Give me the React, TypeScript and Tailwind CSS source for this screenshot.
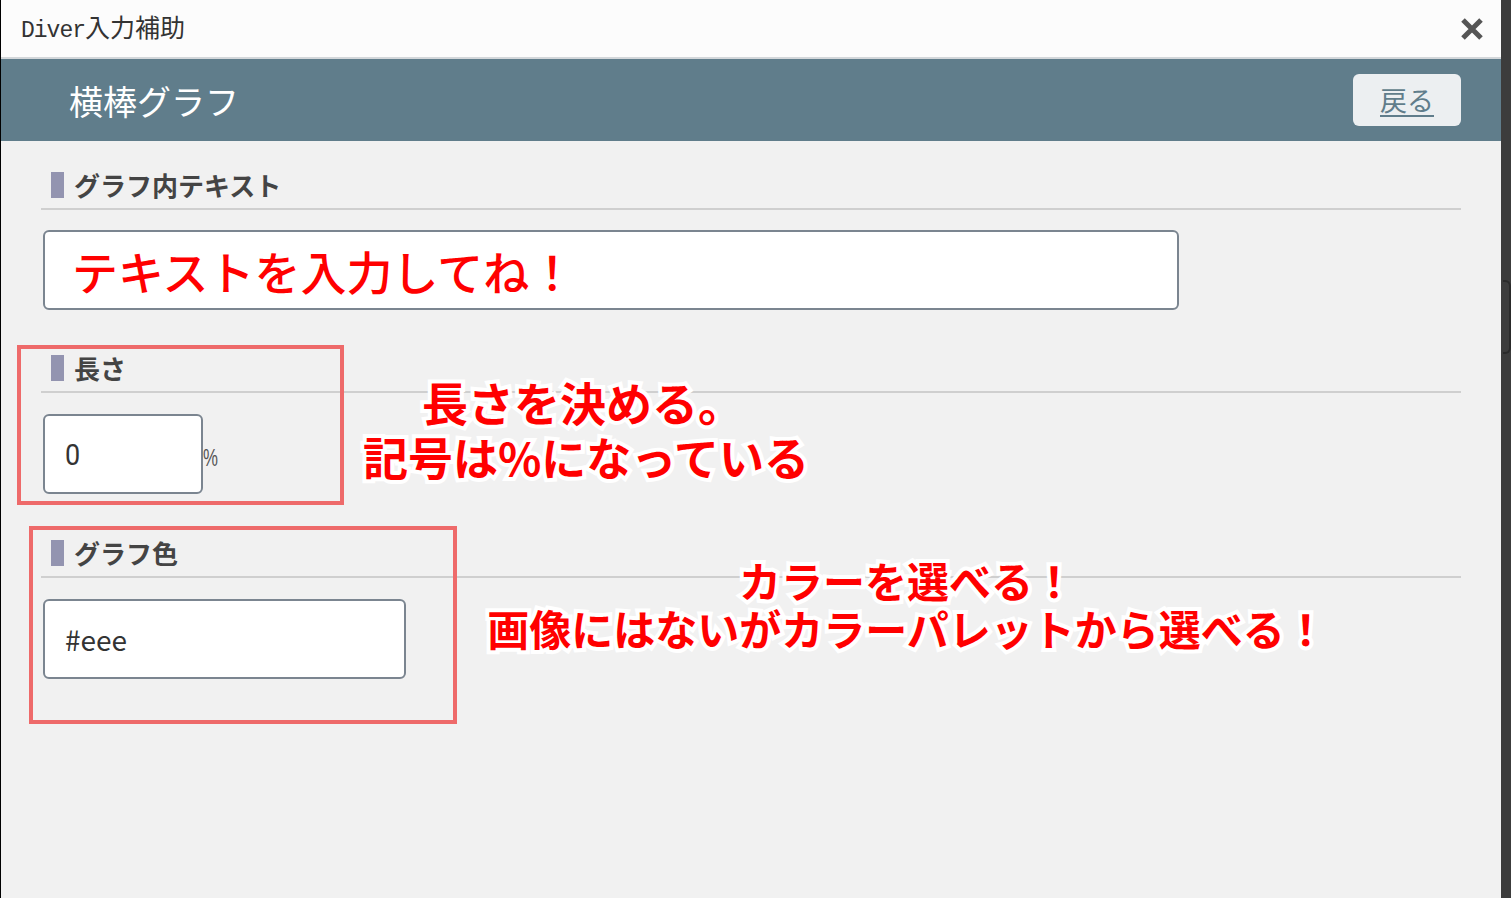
const jp = "font-['Noto_Sans_CJK_JP','Noto_Sans',sans-serif]";
const outline = "[-webkit-text-stroke:8px_white] [paint-order:stroke_fill]";

function SectionHeader({ label }: { label: string }) {
  return (
    <div>
      <div className="flex items-center h-[26px] pl-[10px] gap-[10px]">
        <span className="w-[13px] h-[26px] bg-[#9394b0]" />
        <span className={`${jp} text-[26px] font-bold text-[#444] leading-none`}>{label}</span>
      </div>
      <div className="mt-[10px] h-[2px] bg-[#cfcfcf]" />
    </div>
  );
}

function CloseIcon() {
  return (
    <svg width="24" height="24" viewBox="0 0 24 24">
      <path d="M3 3 L21 21 M21 3 L3 21" stroke="#555" strokeWidth="5" />
    </svg>
  );
}

export default function App() {
  return (
    <div className="w-[1511px] h-[898px] flex overflow-hidden">
      <div className="w-[1501px] h-full border-l border-black bg-[#f1f1f1] flex flex-col">
        {/* title bar */}
        <div className="h-[57px] bg-[#fcfcfc] flex items-center justify-between pl-[20px] pr-[17px] border-b-2 border-[#d3d7da] box-content">
          <div className="flex items-baseline text-[#333]">
            <span className="font-['Liberation_Mono',monospace] text-[23px] tracking-[-1px]">Diver</span>
            <span className={`${jp} text-[25px]`}>入力補助</span>
          </div>
          <CloseIcon />
        </div>

        {/* header */}
        <div className="h-[82px] bg-[#607d8b] flex items-center justify-between pl-[68px] pr-[40px]">
          <span className={`${jp} text-[34px] text-white`}>横棒グラフ</span>
          <button className="w-[108px] h-[52px] rounded-[6px] bg-[#eceff1] flex items-center justify-center">
            <span className={`${jp} text-[27px] text-[#607d8b] underline underline-offset-[4px]`}>戻る</span>
          </button>
        </div>

        {/* content */}
        <div className="relative flex-1 pl-[40px] pr-[40px] pt-[31px]">
          <SectionHeader label="グラフ内テキスト" />
          <div className="mt-[20px] ml-[2px] w-[1136px] h-[80px] bg-white border-2 border-[#7b8590] rounded-[6px] flex items-center pl-[27px]">
            <span className={`${jp} text-[46px] font-medium text-[#f00] leading-none`}>テキストを入力してね！</span>
          </div>

          <div className="mt-[45px]">
            <SectionHeader label="長さ" />
          </div>
          <div className="mt-[21px] ml-[2px] flex items-end">
            <div className="w-[160px] h-[80px] bg-white border-2 border-[#7b8590] rounded-[6px] flex items-center pl-[20px]">
              <span className="font-['Roboto',sans-serif] text-[30px] text-[#333] scale-x-[0.9] origin-left">0</span>
            </div>
            <span className="font-['Liberation_Sans',sans-serif] text-[24px] leading-none text-[#555] mb-[24px] scale-x-[0.7] origin-left">%</span>
          </div>

          <div className="mt-[46px]">
            <SectionHeader label="グラフ色" />
          </div>
          <div className="mt-[21px] ml-[2px] w-[363px] h-[80px] bg-white border-2 border-[#7b8590] rounded-[6px] flex items-center pl-[20px]">
            <span className={`${jp} text-[28px] text-[#333]`}>#eee</span>
          </div>

          {/* annotation boxes */}
          <div className="absolute left-[16px] top-[204px] w-[327px] h-[160px] border-4 border-[#ee6a6a]" />
          <div className="absolute left-[28px] top-[385px] w-[428px] h-[198px] border-4 border-[#ee6a6a]" />

          {/* annotation texts */}
          <div className={`absolute left-[340px] top-[233px] w-[490px] flex flex-col items-center ${jp} font-bold text-[#f00] ${outline}`}>
            <span className="text-[46px] leading-[55px] pr-[6px]">長さを決める。</span>
            <span className="text-[45px] leading-[55px]">記号は%になっている</span>
          </div>
          <div className={`absolute left-[470px] top-[415px] w-[872px] flex flex-col items-center ${jp} font-bold text-[#f00] ${outline}`}>
            <span className="text-[42px] leading-[48px]">カラーを選べる！</span>
            <span className="text-[42px] leading-[48px]">画像にはないがカラーパレットから選べる！</span>
          </div>
        </div>
      </div>

      {/* side strip */}
      <div className="w-[10px] h-full bg-[#3c3c3c] flex flex-col pt-[280px]">
        <div className="h-[74px] ml-[2px] rounded-r-[6px] border-2 border-l-0 border-[#2a2a2a]" />
      </div>
    </div>
  );
}
